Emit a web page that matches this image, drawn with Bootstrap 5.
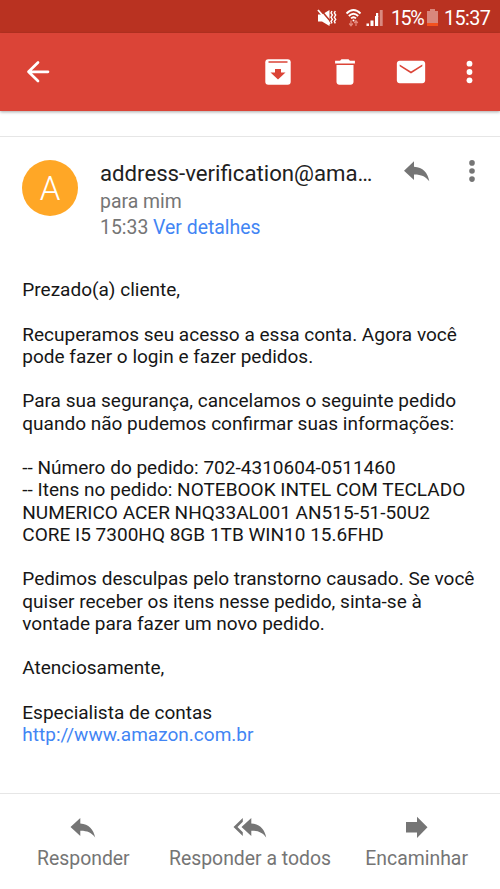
<!DOCTYPE html>
<html lang="pt-BR">
<head>
  <meta charset="UTF-8">
  <meta name="viewport" content="width=device-width, initial-scale=1">
  <title>E-mail</title>
  <link href="https://cdn.jsdelivr.net/npm/bootstrap@5.3.3/dist/css/bootstrap.min.css" rel="stylesheet">
  <style>
    body { font-family: Roboto, "Liberation Sans", sans-serif; color: #161616; background: #fff; }
    a { color: #4285f4; }
    svg { display: block; flex: none; }
    .tela { height: 889px; overflow: hidden; }
    .barra-status { height: 33px; background: #b93221; font-size: 19.8px; line-height: 33px; padding: 2px 9px 0 0; }
    .bateria-texto { width: 33px; letter-spacing: -1.500px; margin: 1px 3px 0 7px; }
    .hora { width: 47px; letter-spacing: -.6px; margin: 1px 0 0 6px; }
    .barra-app { height: 78px; background: #db4437; padding: 0 14px 0 21px; box-shadow: 0 1px 3px rgba(0, 0, 0, .35); }
    .icones { gap: 32.500px; margin-right: 24px; }
    .assunto { height: 26px; border-bottom: 1px solid #e6e6e6; }
    .remetente { height: 142px; padding: 23px 11px 0 22px; }
    .avatar { width: 56px; height: 56px; background: #ffa726; font-size: 33px; line-height: 1; font-weight: 300; }
    .dados { width: 280px; margin-left: 22px; color: #757575; font-size: 19.4px; line-height: 26.500px; white-space: nowrap; }
    .endereco { font-size: 22.2px; line-height: 28px; margin: -1px 0 1.500px; color: #212121; }
    .mais { margin-left: 25px; }
    .mensagem { padding: 0 0 0 22.300px; font-size: 19.03px; line-height: 22.25px; white-space: nowrap; }
    .mensagem p { margin-bottom: 22.25px; }
    .acoes { height: 96px; border-top: 1px solid #e6e6e6; color: #757575; font-size: 19.4px; line-height: 24px; padding: 17px 32px 0 37px; }
    .acoes span { padding-top: 1.500px; }
    .todos { padding-left: 5px; }
  </style>
</head>
<body>
  <div class="tela d-flex flex-column">

    <!-- Barra de status -->
    <div class="barra-status d-flex justify-content-end align-items-center text-white">
      <svg width="20" height="20" viewBox="0 0 20 20" fill="#fff">
        <path d="M1 6.500h4L12.500 2v16L5 13.500H1z"/>
        <path d="M3 1l11 13" stroke="#b93221" stroke-width="1.500"/>
        <path d="M1 2l12 14" stroke="#fff" stroke-width="1.800"/>
        <path d="M15 3l-1 2 1.400 2-1.400 2.200 1.400 2.200-1.400 2 1 2M18.300 3l-1 2 1.400 2-1.400 2.200 1.400 2.200-1.400 2 1 2" fill="none" stroke="#fff" stroke-width="1.400"/>
      </svg>
      <svg class="ms-2" width="17" height="20" viewBox="0 0 17 20" fill="none" stroke="#fff" stroke-width="1.800">
        <path d="M1.500 5.500Q8.500-1.500 15.500 5.500M3.800 8Q8.500 3.500 13.200 8M6 10.400Q8.500 8 11 10.400"/>
        <circle cx="8.500" cy="12.400" r="1" fill="#fff" stroke="none"/>
        <path d="M6 12.500v5M4.200 15.500L6 17.700l1.800-2.200M11 18v-5M9.200 15L11 12.800l1.800 2.200" stroke="#e58a7f" stroke-width="1.200"/>
      </svg>
      <svg class="ms-1" width="18" height="18" viewBox="0 0 18 18" fill="#fff">
        <path d="M.5 14.500H3V17H.5zM4.500 11.500h3V17h-3zM9 7h3.200v10H9z"/>
        <path d="M10 4h2.200v4H10z"/>
        <path d="M13.800 1h2.900v16h-2.900z" fill="#d98a80"/>
      </svg>
      <span class="bateria-texto">15%</span>
      <svg width="11" height="17" viewBox="0 0 11 17">
        <path d="M3 0h5v2h3v15H0V2h3z" fill="#d9877c"/>
        <path d="M0 14h11v3H0z" fill="#f4511e"/>
      </svg>
      <span class="hora">15:37</span>
    </div>

    <!-- Barra do aplicativo -->
    <div class="barra-app d-flex align-items-center">
      <svg width="34" height="34" viewBox="0 0 34 34" fill="none" stroke="#fff" stroke-width="2.700" stroke-linecap="round" stroke-linejoin="round">
        <path d="M17 7.500L7.500 16.800 17 26M7.500 16.800H27"/>
      </svg>
      <div class="icones d-flex align-items-center ms-auto">
        <svg width="34" height="34" viewBox="0 0 34 34">
          <rect x="4.300" y="4.300" width="25.400" height="25.400" rx="3" fill="#fff"/>
          <path d="M7.500 6.200h19v1.500h-19zM17 24.500l-7.500-7H14V14h6v3.500h4.500z" fill="#db4437"/>
        </svg>
        <svg width="34" height="34" viewBox="0 0 24 24" fill="#fff"><path d="M6 19c0 1.100.9 2 2 2h8c1.100 0 2-.9 2-2V7H6v12zM19 4h-3.500l-1-1h-5l-1 1H5v2h14V4z"/></svg>
        <svg width="34" height="34" viewBox="0 0 24 24" fill="#fff"><path d="M20 4H4c-1.100 0-1.990.9-1.990 2L2 18c0 1.100.9 2 2 2h16c1.100 0 2-.9 2-2V6c0-1.100-.9-2-2-2zm0 4l-8 5-8-5V6.700l8 5 8-5V8z"/></svg>
      </div>
      <svg width="34" height="34" viewBox="0 0 34 34" fill="#fff"><circle cx="17.500" cy="8.700" r="2.900"/><circle cx="17.500" cy="17" r="2.900"/><circle cx="17.500" cy="25.300" r="2.900"/></svg>
    </div>

    <div class="assunto"></div>

    <!-- Remetente -->
    <div class="remetente d-flex align-items-start">
      <div class="avatar rounded-circle text-white d-flex align-items-center justify-content-center flex-shrink-0">A</div>
      <div class="dados">
        <div class="endereco">address-verification@ama…</div>
        <div>para mim</div>
        <div>15:33 <a href="#" class="text-decoration-none">Ver detalhes</a></div>
      </div>
      <svg class="ms-auto" width="26" height="22" viewBox="0 0 26 22" fill="#757575"><path d="M0 10.700L10 1.300v5.500c9 .6 13.700 6 15.300 14.500C21.500 16.300 17 14.300 10 14.400v5.700z"/></svg>
      <svg class="mais" width="34" height="24" viewBox="0 0 34 24" fill="#757575"><circle cx="17" cy="2.900" r="2.800"/><circle cx="17" cy="11" r="2.800"/><circle cx="17" cy="19.100" r="2.800"/></svg>
    </div>

    <!-- Mensagem -->
    <div class="mensagem flex-grow-1">
      <p>Prezado(a) cliente,</p>
      <p>Recuperamos seu acesso a essa conta. Agora você<br>pode fazer o login e fazer pedidos.</p>
      <p>Para sua segurança, cancelamos o seguinte pedido<br>quando não pudemos confirmar suas informações:</p>
      <p>-- Número do pedido: 702-4310604-0511460<br>-- Itens no pedido: NOTEBOOK INTEL COM TECLADO<br>NUMERICO ACER NHQ33AL001 AN515-51-50U2<br>CORE I5 7300HQ 8GB 1TB WIN10 15.6FHD</p>
      <p>Pedimos desculpas pelo transtorno causado. Se você<br>quiser receber os itens nesse pedido, sinta-se à<br>vontade para fazer um novo pedido.</p>
      <p>Atenciosamente,</p>
      <p>Especialista de contas<br><a href="#" class="text-decoration-none">http://www.amazon.com.br</a></p>
    </div>

    <!-- Ações -->
    <div class="acoes d-flex justify-content-between">
      <div class="d-flex flex-column align-items-center">
        <svg width="26" height="34" viewBox="0 0 26 34" fill="#757575"><path d="M.5 16L10.300 7v5.400c8.500.6 13.300 6 14.900 14C21.500 21.500 17 19.600 10.300 19.700V25z"/></svg>
        <span>Responder</span>
      </div>
      <div class="todos d-flex flex-column align-items-center">
        <svg width="34" height="34" viewBox="0 0 34 34" fill="#757575"><path d="M8.500 16l9.800-9v5.400c8.500.6 13.300 6 14.900 14-3.700-4.900-8.200-6.800-14.900-6.700V25zM.5 16L9.800 7v3.700L4.500 16l5.300 5.300V25z"/></svg>
        <span>Responder a todos</span>
      </div>
      <div class="d-flex flex-column align-items-center">
        <svg width="24" height="34" viewBox="0 0 24 34" fill="#757575"><path d="M1 11h11V5.800l10.500 10.500L12 27v-5.500H1z"/></svg>
        <span>Encaminhar</span>
      </div>
    </div>
  </div>

  <script src="https://cdn.jsdelivr.net/npm/bootstrap@5.3.3/dist/js/bootstrap.bundle.min.js"></script>
</body>
</html>
